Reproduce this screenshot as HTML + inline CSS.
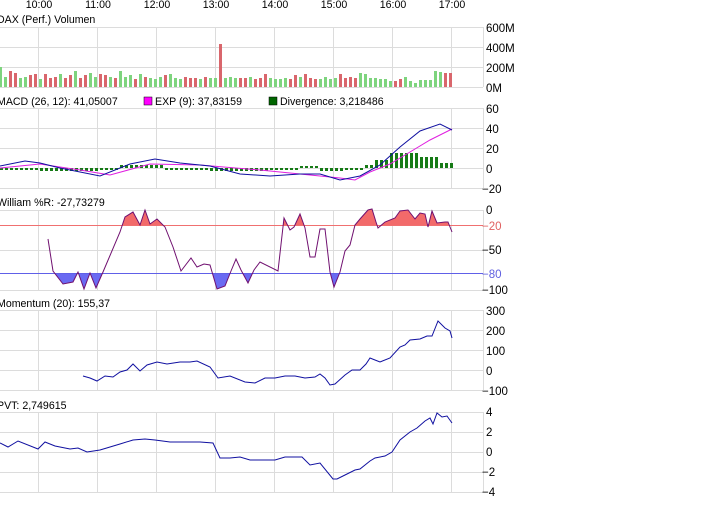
<!DOCTYPE html>
<html><head><meta charset="utf-8"><style>
html,body{margin:0;padding:0;background:#fff;width:710px;height:506px;overflow:hidden}
svg{display:block}
text{font-family:"Liberation Sans",sans-serif;font-size:10.6px;fill:#000}
</style></head><body>
<svg id="s" width="710" height="506" xmlns="http://www.w3.org/2000/svg">
<g stroke="#dcdcdc" stroke-width="1" fill="none" id="grid"></g>
<g id="vol"></g>
<g id="div"></g>
<defs>
<clipPath id="cr"><rect x="0" y="190" width="483" height="35"/></clipPath>
<clipPath id="cb"><rect x="0" y="273" width="483" height="20"/></clipPath>
</defs>
<g id="wr"></g>
<line x1="0" y1="225.5" x2="483" y2="225.5" stroke="#f07070"/>
<line x1="0" y1="273.5" x2="483" y2="273.5" stroke="#6060e8"/>
<g id="lines" fill="none" stroke-width="1"></g>
<g id="txt"></g>
<g text-anchor="middle"><text x="39" y="8">10:00</text><text x="98" y="8">11:00</text><text x="157" y="8">12:00</text><text x="216" y="8">13:00</text><text x="275" y="8">14:00</text><text x="334" y="8">15:00</text><text x="393" y="8">16:00</text><text x="452" y="8">17:00</text></g>
<text x="-3" y="23">DAX (Perf.) Volumen</text>
<text x="-3" y="105">MACD (26, 12): 41,05007</text>
<rect x="144" y="97" width="8" height="8" fill="#f0f" stroke="#000" stroke-width="0.5"/>
<text x="155" y="105">EXP (9): 37,83159</text>
<rect x="269" y="97" width="8" height="8" fill="#060" stroke="#000" stroke-width="0.5"/>
<text x="280" y="105">Divergence: 3,218486</text>
<text x="-3" y="206">William %R: -27,73279</text>
<text x="-3" y="307">Momentum (20): 155,37</text>
<text x="-3" y="409">PVT: 2,749615</text>
<g id="lab"></g>
</svg>
<script>
var ns="http://www.w3.org/2000/svg";
function el(p,t,a,txt){var e=document.createElementNS(ns,t);for(var k in a)e.setAttribute(k,a[k]);if(txt!=null)e.textContent=txt;document.getElementById(p).appendChild(e);return e;}
var vx=[38,97,156,215,274,333,392,451];
var panels=[[27,87,[27,47,67,87]],[108,188,[108,128,148,168,188]],[210,290,[210,250,290]],[310,390,[310,330,350,370,390]],[412,492,[412,432,452,472,492]]];
panels.forEach(function(p){p[2].forEach(function(y){el("grid","line",{x1:0,y1:y+.5,x2:483,y2:y+.5});});
vx.forEach(function(x){el("grid","line",{x1:x+.5,y1:p[0],x2:x+.5,y2:p[1]});});
el("grid","line",{x1:483.5,y1:p[0],x2:483.5,y2:p[1]});});
var L=[["600M",32],["400M",52],["200M",72],["0M",92],["60",113],["40",133],["20",153],["0",173],["-20",193],["0",214],["-20",230,"#e06060"],["-50",254],["-80",278,"#6060e0"],["-100",294],["300",315],["200",335],["100",355],["0",375],["-100",395],["4",416],["2",436],["0",456],["-2",476],["-4",496]];
L.forEach(function(l){var t=el("lab","text",{x:l[0][0]=="-"?482:486,y:l[1]},l[0].replace("-","\u2212"));t.style.fontSize="11.5px";if(l[2])t.style.fill=l[2];});
var vh=[15,8,12,11,7,8,9,10,6,10,7,8,10,7,9,12,7,9,11,8,10,9,8,7,12,8,9,6,10,8,7,6,8,9,10,7,6,8,7,7,6,8,7,7,9,7,8,7,7,7,8,6,7,10,7,6,6,7,6,9,8,10,7,6,6,8,6,7,10,7,8,7,11,10,7,7,6,6,6,6,8,10,6,4,7,7,7,16,15,14,14,14,15,16,10,10,16,14];
var vc="ggrrggrrgrrrgrrgrrggrrgrgggrgrgggrgggrrrgrggrgggrrgrrrggggrrgrrrggggrrrrgggggggrrggggggggrrrgggrgr";
for(var i=0;i<92;i++){var h=vh[i]||8;if(i<78)h=Math.round(h*1.3);var x=i*5-1;if(x>452)break;var c=vc[i]=="r"?"#d9666c":"#7ed47e";if(i==44){h=43;c="#d9666c";}el("vol","rect",{x:x,y:87-h,width:3,height:h,fill:c});}
for(var x=0;x<452;x+=5){var d;if(x<40)d=-1;else if(x<100)d=-3;else if(x<120)d=-1;else if(x<165)d=3;else if(x<210)d=0;else if(x<270)d=-3;else if(x<300)d=0;else if(x<320)d=2;else if(x<345)d=-3;else if(x<365)d=-1;else if(x<375)d=3;else if(x<390)d=8;else if(x<420)d=15;else if(x<440)d=11;else d=5;
var h=Math.max(Math.abs(d),2);el("div","rect",{x:x,y:d>0?168-h:168,width:3,height:h,fill:"#167a16"});}
function pl(pts,col){el("lines","polyline",{points:pts,stroke:col});}
var macd="0,166 25,161 40,163 60,168 100,176 130,164 155,159 180,163 210,166 240,174 270,176 300,174 320,174 340,180 360,176 380,165 400,147 420,131 440,124 452,130";
var exp="0,168 40,164 80,170 110,175 150,164 200,165 260,170 300,174 340,178 355,180 370,172 390,164 410,152 430,140 452,129";
pl(exp,"#e020e0");pl(macd,"#1010a0");
var w="48,239 53,271 63,284 73,282 78,272 84,289 90,273 96,288 103,272 120,232 125,217 133,212 140,225 145,210 150,224 157,219 165,227 173,247 181,271 191,258 197,267 204,264 210,265 217,289 225,286 231,271 236,259 241,270 248,283 254,270 260,262 278,271 284,218 290,230 294,227 300,214 305,228 310,257 315,257 320,229 325,229 330,272 334,287 340,272 345,251 350,245 355,225 360,219 368,210 372,209 376,222 378,228 385,222 395,218 400,211 408,210 415,219 420,213 425,214 428,227 432,211 437,223 445,222 448,222 452,232";
el("wr","polygon",{points:"48,225 "+w+" 452,225",fill:"#f26a6a","clip-path":"url(#cr)"});
el("wr","polygon",{points:"48,273 "+w+" 452,273",fill:"#6a6af2","clip-path":"url(#cb)"});
pl(w,"#701070");
pl("83,376 90,378 97,381 105,376 113,377 120,372 127,370 133,364 140,371 147,365 157,362 167,364 180,362 190,362 197,361 210,367 218,378 230,376 245,382 255,383 265,378 275,378 285,376 295,376 305,378 315,377 320,374 325,378 330,385 335,384 345,375 352,370 360,370 366,364 370,358 375,360 380,362 390,358 400,347 405,345 410,340 420,339 427,336 432,336 438,321 445,328 450,331 452,338","#1010a0");
pl("0,443 8,447 18,441 38,449 45,442 55,446 70,449 78,448 87,452 100,450 110,447 120,444 133,440 145,439 155,440 170,442 190,442 200,442 213,443 220,458 230,458 240,457 250,460 260,460 275,460 285,457 302,457 310,465 320,463 333,479 337,479 345,475 355,470 360,469 370,461 375,458 385,456 392,452 400,440 410,432 417,428 425,421 430,418 433,424 437,413 442,417 447,416 452,423","#1010a0");
</script>
</body></html>
